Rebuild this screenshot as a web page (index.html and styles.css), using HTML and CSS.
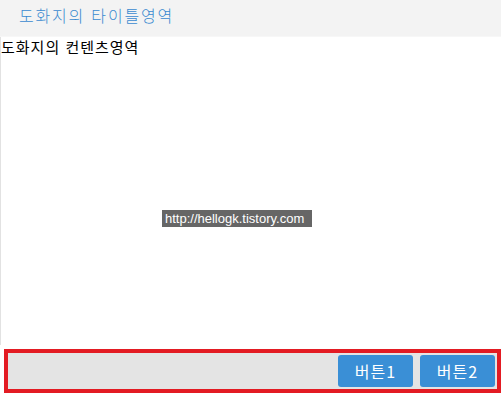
FILE: index.html
```html
<!DOCTYPE html>
<html lang="ko">
<head>
<meta charset="utf-8">
<link rel="stylesheet" href="styles.css">
</head>
<body>
<div class="dialog">
  <div class="title">도화지의 타이틀영역</div>
  <div class="content">도화지의 컨텐츠영역</div>
  <div class="footer">
    <button class="btn">버튼1</button>
    <button class="btn">버튼2</button>
  </div>
</div>
<div class="watermark">http://hellogk.tistory.com</div>
</body>
</html>
```
FILE: styles.css
```css
html, body {
  margin: 0;
  padding: 0;
  background: #ffffff;
}
body {
  width: 501px;
  height: 393px;
  overflow: hidden;
  position: relative;
  font-family: "Noto Sans CJK KR", "Liberation Sans", sans-serif;
}
.dialog {
  display: flex;
  flex-direction: column;
  height: 393px;
}
.title {
  height: 37px;
  box-sizing: border-box;
  background: #f3f3f3;
  color: #3a8ad0;
  font-size: 16px;
  font-weight: 300;
  letter-spacing: 1.8px;
  line-height: 30px;
  padding-left: 19px;
  border-bottom: 1px solid #f7f7f7;
}
.content {
  flex: 1;
  border-left: 1px solid #e2e2e2;
  margin-bottom: 4px;
  font-size: 15px;
  line-height: 20px;
  letter-spacing: 1px;
  color: #000;
}
.footer {
  height: 44px;
  box-sizing: border-box;
  margin-left: 4px;
  border: 4px solid #e31b23;
  background: #e4e4e4;
  display: flex;
  justify-content: flex-end;
  align-items: flex-start;
  gap: 7px;
  padding: 2px 2px 0 0;
}
.btn {
  width: 75px;
  height: 32px;
  border: none;
  border-radius: 3px;
  background: #3a8fd6;
  color: #ffffff;
  font-family: "Noto Sans CJK KR", "Liberation Sans", sans-serif;
  font-size: 16px;
  letter-spacing: 1px;
  padding: 0;
}
.watermark {
  position: absolute;
  left: 162px;
  top: 210px;
  width: 150px;
  height: 17px;
  background: #666666;
  color: #ffffff;
  font-family: "Liberation Sans", sans-serif;
  font-size: 13px;
  line-height: 17px;
  padding-left: 3px;
  box-sizing: border-box;
  white-space: nowrap;
  overflow: hidden;
}
```
